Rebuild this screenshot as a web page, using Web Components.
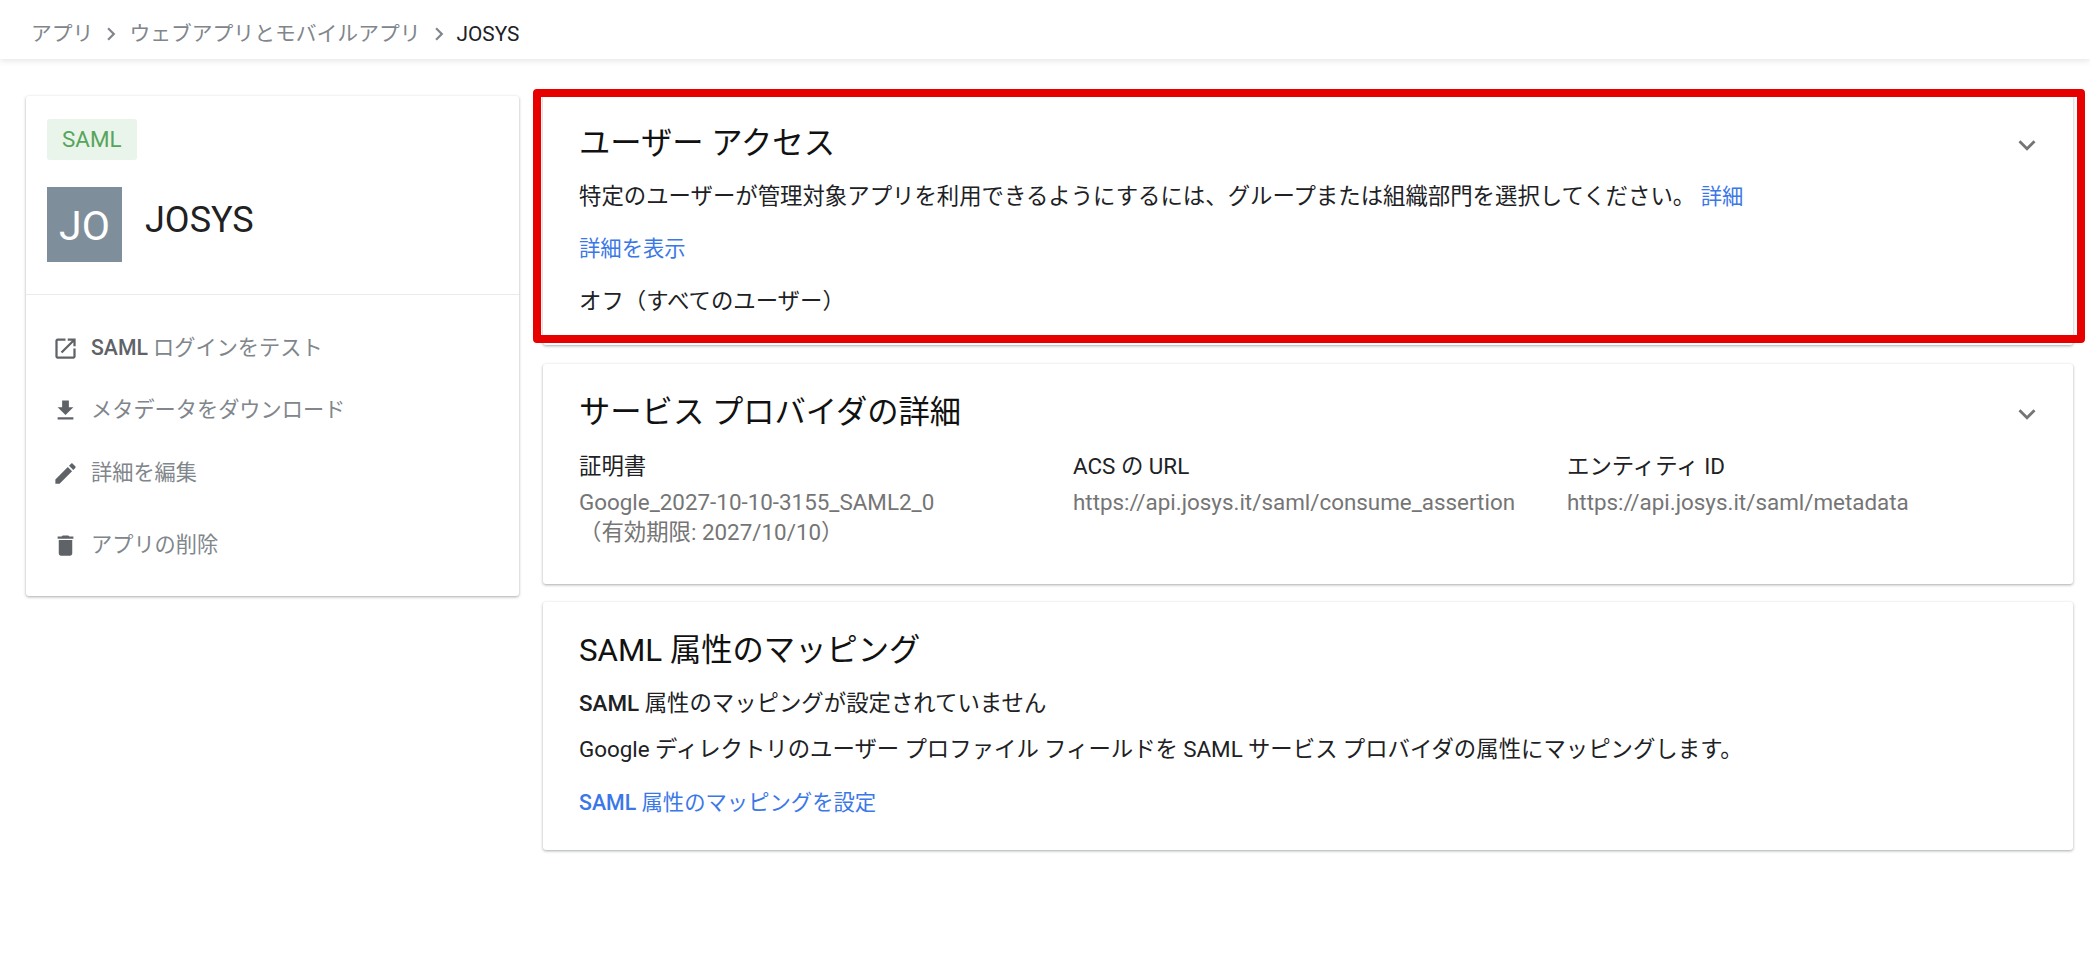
<!DOCTYPE html>
<html lang="ja">
<head>
<meta charset="utf-8">
<title>JOSYS</title>
<style>
    html, body {
        margin: 0;
        background: #fff;
        font-family: Roboto, "Noto Sans CJK JP", sans-serif;
        font-size: 22.4px;
        color: #202124;
    }
    body {
        position: relative;
        height: 958px;
        overflow: hidden;
    }
    a-page {
        display: grid;
        grid-template-columns: 493px 1530px;
        column-gap: 24px;
        align-items: start;
        padding: 36px 17px 0 26px;
    }
    .stack {
        display: flex;
        flex-direction: column;
    }
</style>
</head>
<body>

<a-breadcrumb>
    <span>アプリ</span>
    <span>ウェブアプリとモバイルアプリ</span>
    <span>JOSYS</span>
</a-breadcrumb>

<a-page>
    <a-app-card badge="SAML" initials="JO" name="JOSYS">
        <a-menu-item icon="open"><b>SAML</b> ログインをテスト</a-menu-item>
        <a-menu-item icon="download" style="margin-top:34px">メタデータをダウンロード</a-menu-item>
        <a-menu-item icon="edit" style="margin-top:35px">詳細を編集</a-menu-item>
        <a-menu-item icon="delete" style="margin-top:44px">アプリの削除</a-menu-item>
    </a-app-card>

    <div class="stack">
        <a-panel heading="ユーザー アクセス" expandable style="height:250px">
            <a-line gap="20">特定のユーザーが管理対象アプリを利用できるようにするには、グループまたは組織部門を選択してください。 <a-link>詳細</a-link></a-line>
            <a-line gap="23"><a-link>詳細を表示</a-link></a-line>
            <a-line gap="24">オフ（すべてのユーザー）</a-line>
        </a-panel>

        <a-panel heading="サービス プロバイダの詳細" expandable style="height:220px;margin-top:19px">
            <a-columns>
                <a-field label="証明書">Google_2027-10-10-3155_SAML2_0<br>（有効期限: 2027/10/10）</a-field>
                <a-field label="ACS の URL">https://api.josys.it/saml/consume_assertion</a-field>
                <a-field label="エンティティ ID">https://api.josys.it/saml/metadata</a-field>
            </a-columns>
        </a-panel>

        <a-panel heading="SAML 属性のマッピング" style="height:248px;margin-top:18px">
            <a-line gap="20"><b style="font-weight:500">SAML</b> 属性のマッピングが設定されていません</a-line>
            <a-line gap="18" style="word-spacing:-.3px">Google ディレクトリのユーザー プロファイル フィールドを SAML サービス プロバイダの属性にマッピングします。</a-line>
            <a-line gap="25"><a-link><b style="font-weight:500">SAML</b> 属性のマッピングを設定</a-link></a-line>
        </a-panel>
    </div>
</a-page>

<a-highlight></a-highlight>

<script>
const iconPaths = {
    open: 'M19 19H5V5h7V3H5c-1.11 0-2 .9-2 2v14c0 1.1.89 2 2 2h14c1.1 0 2-.9 2-2v-7h-2v7zM14 3v2h3.59l-9.83 9.83 1.41 1.41L19 6.41V10h2V3h-7z',
    download: 'M19 9h-4V3H9v6H5l7 7 7-7zM5 18v2h14v-2H5z',
    edit: 'M3 17.25V21h3.75L17.81 9.94l-3.75-3.75L3 17.25zM20.71 7.04c.39-.39.39-1.02 0-1.41l-2.34-2.34c-.39-.39-1.02-.39-1.41 0l-1.83 1.83 3.75 3.75 1.83-1.83z',
    delete: 'M6 19c0 1.1.9 2 2 2h8c1.1 0 2-.9 2-2V7H6v12zM19 4h-3.5l-1-1h-5l-1 1H5v2h14V4z',
    expand: 'M16.59 8.59L12 13.17 7.41 8.59 6 10l6 6 6-6z',
    chevron: 'M10 6L8.59 7.41 13.17 12l-4.58 4.59L10 18l6-6z'
};

function iconSvg(name, size, color) {
    return `<svg width="${size}" height="${size}" viewBox="0 0 24 24" fill="${color}" style="display:block;flex:none"><path d="${iconPaths[name]}"/></svg>`;
}

class ABase extends HTMLElement {
    constructor() {
        super();
        this.attachShadow({ mode: 'open' });
    }
}

class ABreadcrumb extends ABase {
    connectedCallback() {
        let items = Array.from(this.querySelectorAll('span'));
        let html = `
            <style>
                :host {
                    display: flex;
                    align-items: center;
                    box-sizing: border-box;
                    height: 59px;
                    padding: 8px 0 0 31px;
                    background: #fff;
                    box-shadow: 0 2px 6px rgba(0,0,0,.1);
                    color: #80868b;
                    font-size: 20.8px;
                    line-height: 28px;
                    position: relative;
                }
                svg { margin: 0 5px; }
                .last { color: #202124; }
            </style>`;
        items.forEach((item, i) => {
            if (i > 0) html += iconSvg('chevron', 26, '#80868b');
            html += `<span class="${i === items.length - 1 ? 'last' : ''}">${item.textContent}</span>`;
        });
        this.shadowRoot.innerHTML = html;
    }
}

class AAppCard extends ABase {
    connectedCallback() {
        this.shadowRoot.innerHTML = `
            <style>
                :host {
                    display: block;
                    height: 500px;
                    margin-top: 1px;
                    background: #fff;
                    border-radius: 3px;
                    box-shadow: 0 1px 3px rgba(60,64,67,.45);
                }
                .top {
                    height: 199px;
                    padding: 23px 0 0 21px;
                    box-sizing: border-box;
                    border-bottom: 1px solid #e8eaed;
                }
                .badge {
                    display: inline-block;
                    height: 41px;
                    line-height: 41px;
                    padding: 0 15px;
                    border-radius: 3px;
                    background: #e9f4ea;
                    color: #57a55a;
                }
                .id {
                    display: flex;
                    align-items: center;
                    margin-top: 27px;
                    height: 75px;
                }
                .avatar {
                    display: flex;
                    align-items: center;
                    justify-content: center;
                    width: 75px;
                    height: 75px;
                    background: #7e8f9b;
                    color: #fff;
                    font-size: 41px;
                    padding-top: 2px;
                    box-sizing: border-box;
                }
                .name {
                    margin: 0 0 9px 23px;
                    font-size: 36px;
                    color: #212121;
                }
                .menu {
                    padding-top: 39px;
                }
            </style>
            <div class="top">
                <span class="badge">${this.getAttribute('badge')}</span>
                <div class="id">
                    <div class="avatar">${this.getAttribute('initials')}</div>
                    <div class="name">${this.getAttribute('name')}</div>
                </div>
            </div>
            <div class="menu"><slot></slot></div>`;
    }
}

class AMenuItem extends ABase {
    connectedCallback() {
        this.shadowRoot.innerHTML = `
            <style>
                :host {
                    display: flex;
                    align-items: center;
                    height: 28px;
                    font-size: 21.2px;
                    line-height: 28px;
                    padding-left: 26px;
                    color: #80868b;
                }
                svg { margin-right: 12px; }
                ::slotted(b) { font-weight: 500; color: #5f6368; }
            </style>
            ${iconSvg(this.getAttribute('icon'), 27, '#5f6368')}
            <span><slot></slot></span>`;
    }
}

class APanel extends ABase {
    connectedCallback() {
        let arrow = this.hasAttribute('expandable') ? iconSvg('expand', 34, '#757575') : '';
        this.shadowRoot.innerHTML = `
            <style>
                :host {
                    display: block;
                    box-sizing: border-box;
                    padding: 31px 29px 0 36px;
                    background: #fff;
                    border-radius: 3px;
                    box-shadow: 0 1px 3px rgba(60,64,67,.45);
                }
                .head {
                    display: flex;
                    justify-content: space-between;
                    align-items: center;
                    height: 36px;
                }
                .head svg { margin-top: 2px; }
                h2 {
                    margin: 0;
                    font-size: 31.3px;
                    font-weight: 400;
                    line-height: 36px;
                    color: #111;
                }
            </style>
            <div class="head"><h2>${this.getAttribute('heading')}</h2>${arrow}</div>
            <slot></slot>`;
    }
}

class ALine extends ABase {
    connectedCallback() {
        this.shadowRoot.innerHTML = `
            <style>
                :host {
                    display: block;
                    line-height: 28px;
                    margin-top: ${this.getAttribute('gap')}px;
                    color: #202124;
                    white-space: nowrap;
                }
            </style>
            <slot></slot>`;
    }
}

class ALink extends ABase {
    connectedCallback() {
        this.shadowRoot.innerHTML = `
            <style>
                :host { display: inline; color: #3b78e7; font-size: 21.33px; }
            </style>
            <slot></slot>`;
    }
}

class AColumns extends ABase {
    connectedCallback() {
        this.shadowRoot.innerHTML = `
            <style>
                :host {
                    display: grid;
                    grid-template-columns: 494px 494px 1fr;
                    margin-top: 21px;
                }
            </style>
            <slot></slot>`;
    }
}

class AField extends ABase {
    connectedCallback() {
        this.shadowRoot.innerHTML = `
            <style>
                :host { display: block; }
                .label { line-height: 28px; color: #202124; }
                .value { margin-top: 7px; line-height: 30px; color: #757575; white-space: nowrap; }
            </style>
            <div class="label">${this.getAttribute('label')}</div>
            <div class="value"><slot></slot></div>`;
    }
}

// the red frame was drawn over the screenshot, so it sits above the page
class AHighlight extends ABase {
    connectedCallback() {
        this.shadowRoot.innerHTML = `
            <style>
                :host {
                    position: absolute;
                    left: 533px;
                    top: 89px;
                    width: 1552px;
                    height: 254px;
                    box-sizing: border-box;
                    border: 8px solid #e60000;
                    border-radius: 4px;
                }
            </style>`;
    }
}

customElements.define('a-breadcrumb', ABreadcrumb);
customElements.define('a-page', class extends HTMLElement {});
customElements.define('a-app-card', AAppCard);
customElements.define('a-menu-item', AMenuItem);
customElements.define('a-panel', APanel);
customElements.define('a-line', ALine);
customElements.define('a-link', ALink);
customElements.define('a-columns', AColumns);
customElements.define('a-field', AField);
customElements.define('a-highlight', AHighlight);
</script>
</body>
</html>
